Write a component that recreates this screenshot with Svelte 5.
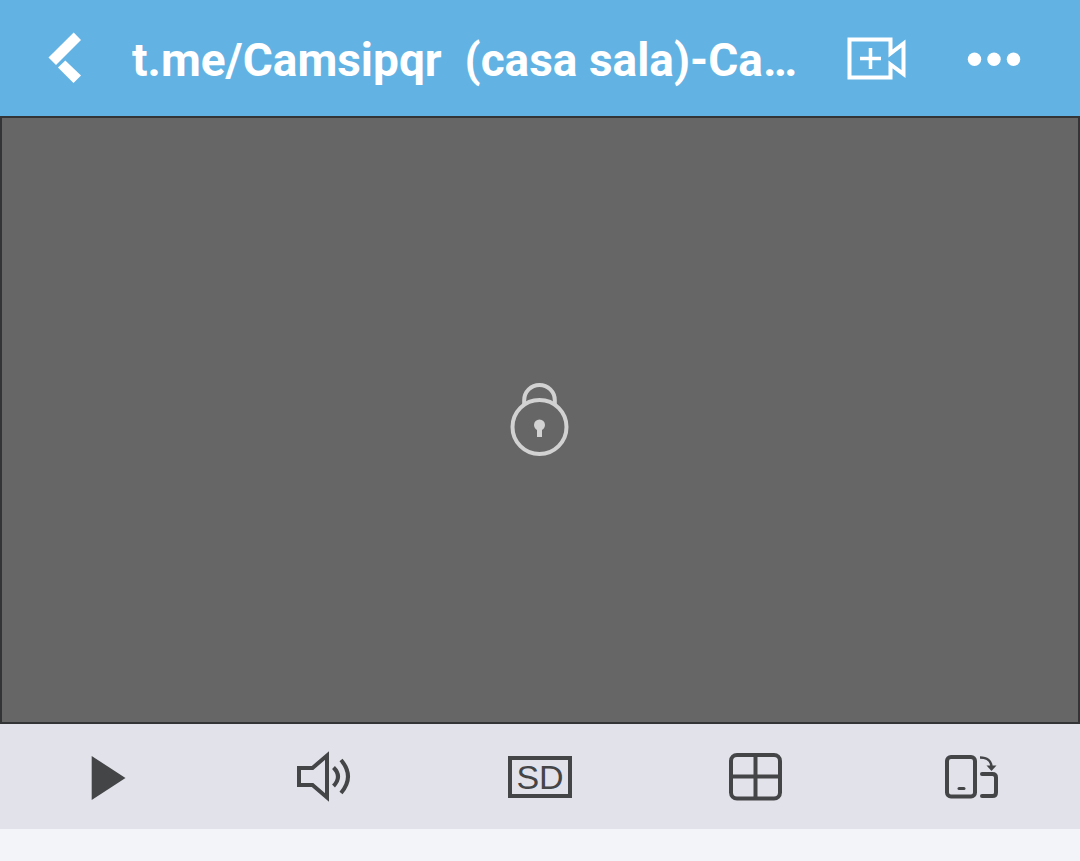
<script>
  let title = $state("t.me/Camsipqr  (casa sala)-Ca…");
</script>

<header class="top_bar">
  <button class="icon_button" aria-label="Back">
    <svg viewBox="0 0 64 64" fill="currentColor">
      <path d="M41.7 6.5 L49 14 L24 39 L16.5 31.5 Z" />
      <path d="M33.3 34.5 L26 41.5 L41.5 57 L49 49.5 Z" />
    </svg>
  </button>
  <h1>{title}</h1>
  <div class="actions">
    <button class="icon_button" aria-label="Add camera">
      <svg viewBox="0 0 64 64" class="line">
        <path d="M45.5 13.5 H4.5 V51.5 H45.5 V38.5 L58.5 48 V17.5 L45.5 27.5 Z" />
        <path d="M15 32.5 H36 M25.5 22 V43" stroke-width="3.5" />
      </svg>
    </button>
    <button class="icon_button" aria-label="More">
      <svg viewBox="0 0 64 64" fill="currentColor">
        <circle cx="12.5" cy="33.3" r="6.7" />
        <circle cx="32" cy="33.3" r="6.7" />
        <circle cx="51.5" cy="33.3" r="6.7" />
      </svg>
    </button>
  </div>
</header>

<main class="video">
  <svg class="lock line" viewBox="0 0 64 80" aria-hidden="true">
    <circle cx="31.5" cy="47" r="27" />
    <path d="M16.2 25 V20.2 A15.3 15.3 0 0 1 46.8 20.2 V25" />
    <circle cx="31.5" cy="45" r="5.5" fill="currentColor" stroke="none" />
    <path d="M31.5 46 V57" stroke-width="5" />
  </svg>
</main>

<nav class="toolbar">
  <button class="icon_button" aria-label="Play">
    <svg viewBox="0 0 64 64" fill="currentColor">
      <path d="M15.7 11 L49.5 33 L15.7 55 Z" />
    </svg>
  </button>
  <button class="icon_button" aria-label="Sound">
    <svg viewBox="0 0 64 64" class="line">
      <path d="M7 23 H20.5 L35 10.5 V52.5 L20.5 40 H7 Z" />
      <path d="M41.5 22.5 Q50.5 31.5 41.5 41 M49 15 Q63 31.5 49 48" />
    </svg>
  </button>
  <button class="icon_button">
    <span class="quality">SD</span>
  </button>
  <button class="icon_button" aria-label="Split view">
    <svg viewBox="0 0 64 64" class="line">
      <rect x="7" y="10" width="49" height="43.5" rx="6" />
      <path d="M31.5 10 V53.5 M7 31.5 H56" />
    </svg>
  </button>
  <button class="icon_button" aria-label="Rotate screen">
    <svg viewBox="0 0 64 64" class="line">
      <rect x="7" y="12" width="28" height="39.5" rx="4" />
      <path
        d="M42 29 H52.5 Q56 29 56 32.5 V47.5 Q56 51 52.5 51 H42"
        stroke-linecap="round"
      />
      <path d="M19 43.5 H24" stroke-width="3" stroke-linecap="round" />
      <path d="M40 12.5 C47 12.5 51.5 16 51.5 22" stroke-width="2.5" />
      <path d="M46.5 20.5 H56.5 L51.5 26 Z" fill="currentColor" stroke="none" />
    </svg>
  </button>
</nav>

<style>
  :global(body) {
    margin: 0;
    background: #f3f4fa;
    font-family: Roboto, sans-serif;
  }
  .top_bar {
    display: flex;
    align-items: center;
    height: 116px;
    padding: 0 54px 0 32px;
    gap: 36px;
    background: #62b3e4;
    color: #fff;
  }
  h1 {
    flex: 1;
    min-width: 0;
    margin: 0;
    padding-top: 4px;
    overflow: hidden;
    white-space: pre;
    font-size: 46px;
    line-height: 60px;
    font-weight: 700;
  }
  .actions {
    display: flex;
    gap: 53px;
  }
  .icon_button {
    display: flex;
    align-items: center;
    justify-content: center;
    flex: none;
    height: 64px;
    padding: 0;
    border: 0;
    background: none;
    color: inherit;
    font: inherit;
    cursor: pointer;
  }
  .icon_button svg {
    display: block;
    width: 64px;
    height: 64px;
  }
  .line {
    fill: none;
    stroke: currentColor;
    stroke-width: 4;
  }
  .video {
    display: flex;
    align-items: center;
    justify-content: center;
    box-sizing: border-box;
    aspect-ratio: 1080 / 608;
    border: 2px solid #333436;
    background: #666;
    color: #d2d2d2;
  }
  .lock {
    width: 64px;
    height: 80px;
  }
  .toolbar {
    display: grid;
    grid-template-columns: repeat(5, 1fr);
    padding: 21px 0 20px;
    background: #e2e2eb;
    color: #444547;
  }
  .quality {
    box-sizing: border-box;
    width: 64px;
    border: 4px solid;
    font-family: "Liberation Sans", Arial, sans-serif;
    font-size: 34px;
    line-height: 34px;
    text-align: center;
  }
</style>
